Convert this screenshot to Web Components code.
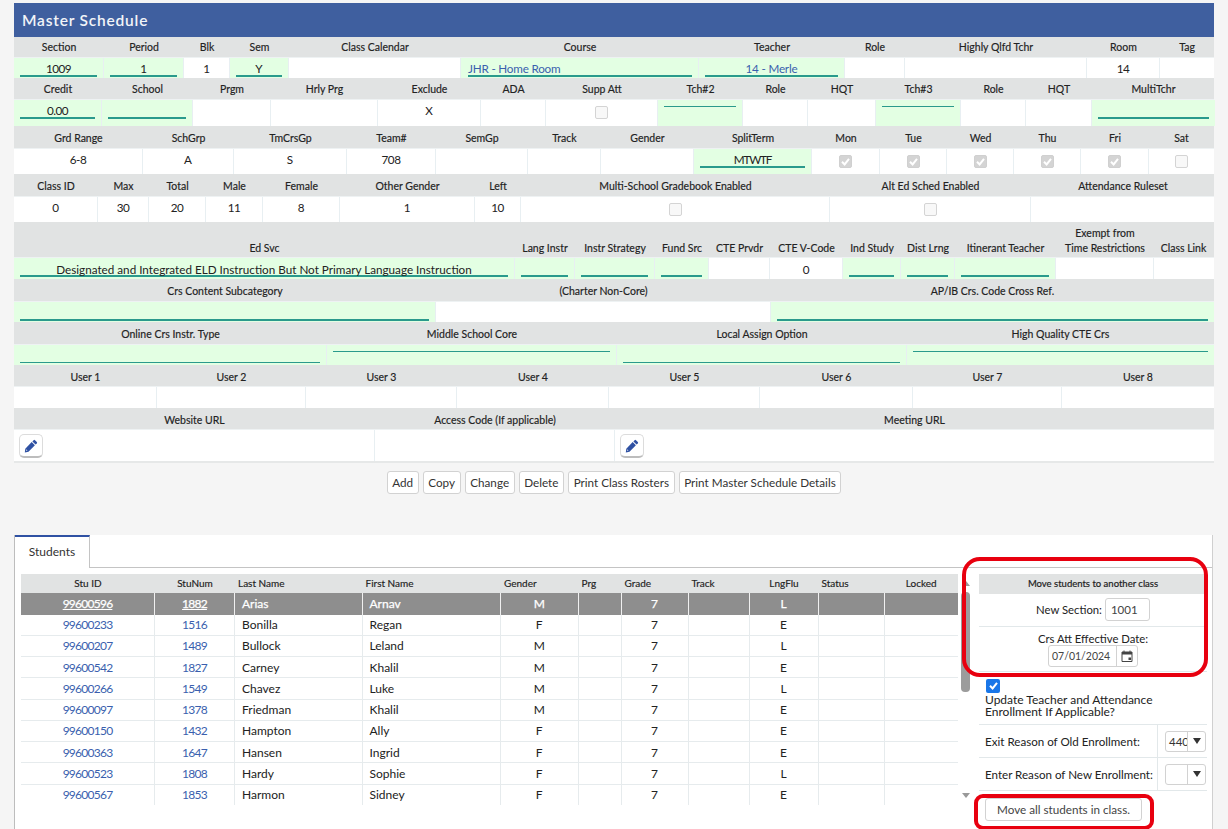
<!DOCTYPE html>
<html><head><meta charset="utf-8"><title>Master Schedule</title>
<style>
html,body{margin:0;padding:0;background:#f5f5f5;height:829px;overflow:hidden;font-family:Lato,"Liberation Sans",sans-serif;color:#222}
ms-page{display:block}
</style></head><body>
<ms-page>
<ms-panel heading="Master Schedule">
<ms-form-row lh="21" vh="20" vl="21" cols="90 80 46 59 172 238 146 60 182 73 54"
 labels="Section|Period|Blk|Sem|Class Calendar|Course|Teacher|Role|Highly Qlfd Tchr|Room|Tag"
 values="g:1009|g:1|t:1|g:Y|t:|gl:JHR - Home Room|gla:14 - Merle|t:|t:|t:14|t:"></ms-form-row>
<ms-form-row lh="22" vh="26" vl="21" cols="88 91 78 107 103 65 112 85 65 68 85 65 66 123"
 labels="Credit|School|Prgm|Hrly Prg|Exclude|ADA|Supp Att|Tch#2|Role|HQT|Tch#3|Role|HQT|MultiTchr"
 values="g:0.00|g:|t:|t:|t:X|t:|c|gt|t:|t:|gt|t:|t:|g:"></ms-form-row>
<ms-form-row lh="23" vh="25" vl="20" cols="129 91 113 89 92 73 93 118 68 67 67 67 68 65"
 labels="Grd Range|SchGrp|TmCrsGp|Team#|SemGp|Track|Gender|SplitTerm|Mon|Tue|Wed|Thu|Fri|Sat"
 values="t:6-8|t:A|t:S|t:708|t:|t:|t:|g:MTWTF|k|k|k|k|k|c"></ms-form-row>
<ms-form-row lh="23" vh="25" vl="20" cols="84 51 57 57 77 135 46 309 201 184"
 labels="Class ID|Max|Total|Male|Female|Other Gender|Left|Multi-School Gradebook Enabled|Alt Ed Sched Enabled|Attendance Ruleset"
 values="t:0|t:30|t:20|t:11|t:8|t:1|t:10|c|c|t:"></ms-form-row>
<ms-form-row lh="36" vh="21" vl="23" pb="1" cols="501 60 80 54 61 73 58 54 101 98 59"
 labels="Ed Svc|Lang Instr|Instr Strategy|Fund Src|CTE Prvdr|CTE V-Code|Ind Study|Dist Lrng|Itinerant Teacher|Exempt from~Time Restrictions|Class Link"
 values="g:Designated and Integrated ELD Instruction But Not Primary Language Instruction|g:|g:|g:|t:|t:0|g:|g:|g:|t:|t:"></ms-form-row>
<ms-form-row lh="23" vh="20" cols="422 335 443"
 labels="Crs Content Subcategory|(Charter Non-Core)|AP/IB Crs. Code Cross Ref."
 values="g:|t:|g:"></ms-form-row>
<ms-form-row lh="23" vh="20" cols="313 290 290 307"
 labels="Online Crs Instr. Type|Middle School Core|Local Assign Option|High Quality CTE Crs"
 values="gb|gt|gb|gt"></ms-form-row>
<ms-form-row lh="22" vh="21" pb="1" cols="143 149 151 152 151 153 149 152"
 labels="User 1|User 2|User 3|User 4|User 5|User 6|User 7|User 8"
 values="t:|t:|t:|t:|t:|t:|t:|t:"></ms-form-row>
<ms-form-row lh="22" vh="31" pb="1" last cols="361 240 599"
 labels="Website URL|Access Code (If applicable)|Meeting URL"
 values="p|t:|p"></ms-form-row>
</ms-panel>
<ms-actions>
<ms-btn>Add</ms-btn><ms-btn>Copy</ms-btn><ms-btn>Change</ms-btn><ms-btn>Delete</ms-btn><ms-btn>Print Class Rosters</ms-btn><ms-btn>Print Master Schedule Details</ms-btn>
</ms-actions>
<ms-tabs tab="Students">
<ms-student-table></ms-student-table>
<ms-move-panel></ms-move-panel>
</ms-tabs>
</ms-page>
<ms-highlight box="962 557 246 120 18"></ms-highlight>
<ms-highlight box="974 794 180 36 9"></ms-highlight>
<script>
const FONT='Lato,"Liberation Sans",sans-serif';
const PENCIL='<svg width="14" height="14" viewBox="0 0 14 14"><path fill="#2f51a3" d="M9.6 1.2a1 1 0 0 1 1.4 0l1.8 1.8a1 1 0 0 1 0 1.4l-1.2 1.2-3.2-3.2zM7.7 3.1l3.2 3.2-6.4 6.4-3.7.9.5-3.900zM2.600 10.300l-.4 1.600 1.200-.3z"/></svg>';
const CHECK='<svg width="13" height="13" viewBox="0 0 13 13"><path d="M3 6.800l2.600 2.600L10 3.800" fill="none" stroke="#fff" stroke-width="2"/></svg>';

class MsPanel extends HTMLElement{
  constructor(){super();this.attachShadow({mode:'open'}).innerHTML=`<style>
  :host{display:block;margin:3px 14px 0;width:1200px}
  header{height:34px;background:#3f5f9f;color:#f2f4f8;font:600 15.500px/34px ${FONT};letter-spacing:.8px;padding-left:8px;box-sizing:border-box}
  </style><header></header><slot></slot>`;}
  connectedCallback(){this.shadowRoot.querySelector('header').textContent=this.getAttribute('heading');}
}
class MsFormRow extends HTMLElement{
  connectedCallback(){
    const cols=this.getAttribute('cols').split(' ').map(n=>n+'px').join(' ');
    const lh=+this.getAttribute('lh'),vh=+this.getAttribute('vh');
    const vl=+(this.getAttribute('vl')||20);
    const labels=this.getAttribute('labels').split('|');
    const values=this.getAttribute('values').split('|');
    const last=this.hasAttribute('last');
    const pb=+(this.getAttribute('pb')||2);
    const r=this.shadowRoot||this.attachShadow({mode:'open'});
    r.innerHTML=`<style>
    :host{display:block}
    .g{display:grid;grid-template-columns:${cols}}
    .ls{height:${lh}px;background:#e1e3e3;border-bottom:1px solid #eef2f3;box-sizing:border-box}
    .l{font:400 10.500px/15px ${FONT};color:#222;display:flex;flex-direction:column;justify-content:flex-end;align-items:center;padding-bottom:${pb}px;text-align:center;white-space:nowrap;-webkit-text-stroke:.15px #222}
    .vs{height:${vh}px;background:#fff;${last?'border-bottom:2px solid #e6e8e8;box-sizing:content-box;':''}}
    .v{box-sizing:border-box;border-right:1px solid #e8eff2;font:400 11.700px/${vl}px ${FONT};text-align:center;color:#222;overflow:hidden;white-space:nowrap}
    .v:last-child{border-right:0}
    .num{letter-spacing:-.5px}
    .tight{letter-spacing:-1.200px}
    .green{background:#e3ffe3}
    .f{margin:0 6px;height:19px;border-bottom:2px solid #2a9a8c;box-sizing:border-box}
    .f.left{text-align:left;margin-left:7px}
    .link{color:#3a5fae;letter-spacing:-.2px}
    .f.top{height:7px;border-bottom-width:1px}
    .f.bot{height:18px;border-bottom-width:1px}
    .box{display:inline-block;width:13px;height:13px;box-sizing:border-box;border-radius:2px;border:1px solid #d4d4d4;background:#f8f8f8;margin-top:6px;vertical-align:top}
    .box.on{background:#d4d4d4;border-color:#d0d0d0}
    .box svg{display:block;margin:-1px}
    .pen{display:flex;width:24px;height:24px;box-sizing:border-box;align-items:center;justify-content:center;margin:4px 0 0 5px;background:#fff;border:1px solid #dcdcdc;border-bottom:2px solid #bdbdbd;border-radius:5px}
    </style><div class="g ls">${labels.map(t=>`<div class="l">${t.split('~').map(x=>`<span>${x}</span>`).join('')}</div>`).join('')}</div>
    <div class="g vs">${values.map(v=>this.cell(v)).join('')}</div>`;
  }
  cell(v){
    const i=v.indexOf(':');const k=i<0?v:v.slice(0,i);const t=i<0?'':v.slice(i+1);
    const c=/^[\d.\-]+$/.test(t)?'num':(t==='MTWTF'?'tight':'');
    switch(k){
      case 't':return `<div class="v ${c}">${t}</div>`;
      case 'g':return `<div class="v green ${c}"><div class="f">${t}</div></div>`;
      case 'gl':return `<div class="v green"><div class="f left link">${t}</div></div>`;
      case 'gla':return `<div class="v green"><div class="f link">${t}</div></div>`;
      case 'gt':return `<div class="v green"><div class="f top"></div></div>`;
      case 'gb':return `<div class="v green"><div class="f bot"></div></div>`;
      case 'c':return `<div class="v"><span class="box"></span></div>`;
      case 'k':return `<div class="v"><span class="box on">${CHECK}</span></div>`;
      case 'p':return `<div class="v"><div class="pen">${PENCIL}</div></div>`;
    }
  }
}
class MsActions extends HTMLElement{
  constructor(){super();this.attachShadow({mode:'open'}).innerHTML=`<style>
  :host{display:flex;justify-content:center;gap:4px;width:1200px;margin:8px 14px 0}
  </style><slot></slot>`;}
}
class MsBtn extends HTMLElement{
  constructor(){super();this.attachShadow({mode:'open'}).innerHTML=`<style>
  :host{display:block;height:23px;box-sizing:border-box;padding:0 4.600px;border:1px solid #d2d2d2;border-radius:3px;background:#fff;font:400 11.700px/21px ${FONT};color:#333;white-space:nowrap}
  </style><slot></slot>`;}
}
class MsTabs extends HTMLElement{
  constructor(){super();this.attachShadow({mode:'open'}).innerHTML=`<style>
  :host{display:block;position:absolute;left:14px;top:535px;width:1199px;height:294px;box-sizing:border-box;background:#fff;border-left:1px solid #bdbdbd;border-right:1px solid #d0d0d0}
  .bar{height:33px;box-sizing:border-box;border-bottom:1px solid #c4c4c4;display:flex}
  .tab{width:75px;height:33px;box-sizing:border-box;border-top:2px solid #2f51a3;border-right:1px solid #c4c4c4;background:#fff;font:400 12px/30px ${FONT};color:#333;text-align:center}
  .body{display:flex;padding:6px 0 0 6px}
  </style><div class="bar"><div class="tab"></div></div><div class="body"><slot></slot></div>`;}
  connectedCallback(){this.shadowRoot.querySelector('.tab').textContent=this.getAttribute('tab');}
}
const STUDENTS=[
['99600596','1882','Arias','Arnav','M','7','L',22,22],
['99600233','1516','Bonilla','Regan','F','7','E',21,20],
['99600207','1489','Bullock','Leland','M','7','L',21,20],
['99600542','1827','Carney','Khalil','M','7','E',21,22],
['99600266','1549','Chavez','Luke','M','7','L',22,22],
['99600097','1378','Friedman','Khalil','M','7','E',21,20],
['99600150','1432','Hampton','Ally','F','7','E',21,20],
['99600363','1647','Hansen','Ingrid','F','7','E',21,22],
['99600523','1808','Hardy','Sophie','F','7','L',22,22],
['99600567','1853','Harmon','Sidney','F','7','E',20,20]];
class MsStudentTable extends HTMLElement{
  constructor(){super();
    const cols='134px 80px 127.500px 138.500px 77.500px 43px 67px 61px 69px 66px 73.500px';
    const heads=['Stu ID','StuNum','Last Name','First Name','Gender','Prg','Grade','Track','LngFlu','Status','Locked'];
    const al=['c','c','l','l','l','l','l','l','c','l','c'];
    const hs=heads.map((h,i)=>`<div class="h ${al[i]}">${h}</div>`).join('');
    const row=(s,idx)=>{const [a,b,l,f,g,gr,lf,h,lh]=s;
      return `<div class="r ${idx==0?'sel':''}" style="height:${h}px;--l:${lh}px">
      <div class="d c"><span class="lk">${a}</span></div><div class="d c"><span class="lk">${b}</span></div>
      <div class="d l">${l}</div><div class="d l">${f}</div><div class="d c">${g}</div><div class="d"></div><div class="d c">${gr}</div><div class="d"></div><div class="d c">${lf}</div><div class="d"></div><div class="d"></div></div>`};
    this.attachShadow({mode:'open'}).innerHTML=`<style>
    :host{display:flex;width:949px}
    .t{width:937px;flex:none}
    .hd,.r{display:grid;grid-template-columns:${cols}}
    .hd{height:19px;background:#e1e3e3}
    .h{font:400 10px/19px ${FONT};color:#222;-webkit-text-stroke:.15px #222;white-space:nowrap}
    .h.c{text-align:center}.h.l{padding-left:3px}
    .r{border-bottom:1px solid #e6ebed;box-sizing:border-box}
    .r:last-child{border-bottom:0}
    .d{font:400 12px/var(--l) ${FONT};color:#222;border-right:1px solid #e6ebed;white-space:nowrap}
    .d:last-child{border-right:0}
    .d.c{text-align:center}.d.l{padding-left:7px}
    .lk{color:#3a5fae;letter-spacing:-.75px}
    .sel{background:#8e8e8e;border-bottom:0}
    .sel .d{color:#fff;-webkit-text-stroke:.25px #fff;border-right-color:#f0f0f0}
    .sel .lk{color:#fff;text-decoration:underline}
    .sb{width:9px;margin-left:3px;display:flex;flex-direction:column;align-items:center;height:231px}
    .up{margin-top:7px;border:4px solid transparent;border-bottom:5px solid #999;border-top:0}
    .th{width:9px;height:100px;margin-top:6px;background:#9c9c9c;border-radius:4px}
    .dn{margin-top:auto;margin-bottom:7px;border:4px solid transparent;border-top:5px solid #999;border-bottom:0}
    </style><div class="t"><div class="hd">${hs}</div>${STUDENTS.map(row).join('')}</div>
    <div class="sb"><div class="up"></div><div class="th"></div><div class="dn"></div></div>`;
  }
}
class MsMovePanel extends HTMLElement{
  constructor(){super();this.attachShadow({mode:'open'}).innerHTML=`<style>
  :host{display:block;width:228px;margin-left:9px;font:400 12px/15px ${FONT};color:#222;flex:none}
  .head{height:20px;background:#e1e3e3;font:400 9.500px/20px ${FONT};color:#222;-webkit-text-stroke:.2px #222;text-align:center}
  .sec{display:flex;align-items:center;justify-content:center;gap:3px;height:33px;border-bottom:1px solid #e2e8ea;box-sizing:border-box;padding-bottom:1px;font-size:11.300px}
  .num{width:45px;height:23px;box-sizing:border-box;border:1px solid #d2d2d2;border-radius:3px;padding-left:5px;font:400 11.500px/22px ${FONT};color:#444;background:#fff}
  .dt{height:45px;border-bottom:1px solid #e2e8ea;box-sizing:border-box;text-align:center;padding-top:4px;font-size:11.300px}
  .dbox{display:inline-flex;width:90px;height:22px;box-sizing:border-box;border:1px solid #d2d2d2;border-radius:3px;margin-top:-1px;text-align:left;font:400 10.500px/21px ${FONT};color:#444}
  .dbox span{flex:1;padding-left:3px;border-right:1px solid #d2d2d2}
  .dbox i{width:20px;display:flex;align-items:center;justify-content:center}
  .upd{height:53px;border-bottom:1px solid #e2e8ea;box-sizing:border-box;padding:6px 0 0 6px;line-height:12px}
  .cb{display:block;width:14px;height:14px;margin:0 0 1px 1px;background:#1976e8;border-radius:2px}
  .cb svg{display:block;margin:.5px}
  .sl{display:grid;grid-template-columns:179px 49px;height:33px;border-bottom:1px solid #e2e8ea;box-sizing:border-box;align-items:center}
  .sl>div:first-child{padding-left:6px;border-right:1px solid #e2e8ea;height:32px;line-height:34px;box-sizing:border-box;white-space:nowrap;font-size:11.600px}
  .se{display:flex;width:41px;height:21px;margin-left:7px;box-sizing:border-box;border:1px solid #d2d2d2;border-radius:3px;font:400 11.500px/19px ${FONT};color:#333;overflow:hidden}
  .se span{width:22px;padding-left:3px;box-sizing:border-box;border-right:1px solid #d2d2d2;overflow:hidden}
  .se i{flex:1;display:flex;align-items:center;justify-content:center}
  .se i:after{content:"";border:4.500px solid transparent;border-top:6px solid #333;border-bottom:0}
  .mv{display:block;width:157px;height:23px;box-sizing:border-box;margin:7px 0 0 6px;border:1px solid #d2d2d2;border-radius:3px;text-align:center;font-size:11.700px;line-height:21px;color:#444;background:#fff}
  </style>
  <div class="head">Move students to another class</div>
  <div class="sec"><span>New Section:</span><div class="num">1001</div></div>
  <div class="dt"><div>Crs Att Effective Date:</div><div class="dbox"><span>07/01/2024</span><i><svg width="12" height="12" viewBox="0 0 12 12"><path fill="none" stroke="#444" d="M1 2h10v9.500H1zM3 .5v2M9 .5v2"/><path fill="#444" d="M1 2h10v2.500H1zM7.500 7.500h2.500v2.500H7.500z"/></svg></i></div></div>
  <div class="upd"><span class="cb">${CHECK}</span>Update Teacher and Attendance<br>Enrollment If Applicable?</div>
  <div class="sl"><div>Exit Reason of Old Enrollment:</div><div class="se"><span>440</span><i></i></div></div>
  <div class="sl"><div>Enter Reason of New Enrollment:</div><div class="se"><span></span><i></i></div></div>
  <div class="mv">Move all students in class.</div>`;}
}
class MsHighlight extends HTMLElement{
  connectedCallback(){const x=this.getAttribute('box').split(' ');const r=this.shadowRoot||this.attachShadow({mode:'open'});r.innerHTML=`<style>
  :host{display:block;position:absolute;left:${x[0]}px;top:${x[1]}px;width:${x[2]}px;height:${x[3]}px;box-sizing:border-box;border:4px solid #e8000f;border-radius:${x[4]}px;pointer-events:none}
  </style>`;}
}
class MsPage extends HTMLElement{
  constructor(){super();this.attachShadow({mode:'open'}).innerHTML=`<style>:host{display:block}</style><slot></slot>`;}
}
customElements.define('ms-panel',MsPanel);
customElements.define('ms-form-row',MsFormRow);
customElements.define('ms-actions',MsActions);
customElements.define('ms-btn',MsBtn);
customElements.define('ms-tabs',MsTabs);
customElements.define('ms-student-table',MsStudentTable);
customElements.define('ms-move-panel',MsMovePanel);
customElements.define('ms-page',MsPage);
customElements.define('ms-highlight',MsHighlight);
</script>
</body></html>
